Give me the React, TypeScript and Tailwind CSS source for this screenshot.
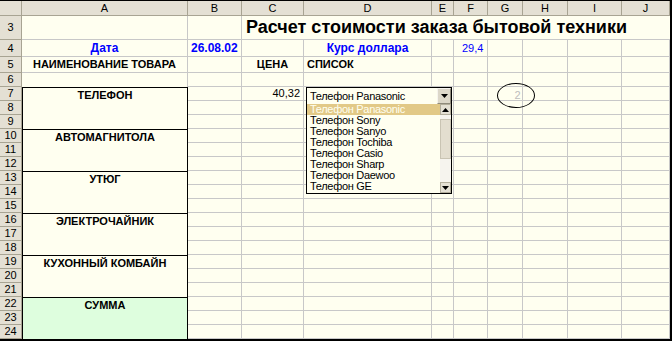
import React from "react";

const cols = ["A", "B", "C", "D", "E", "F", "G", "H", "I", "J"];

const grid = "border-r border-b border-[#C8C8C8]";
const hdr = "bg-[#E4E0D4] border-r border-b border-[#A8A493] flex items-center justify-center text-[11px] text-black";

const groups: Record<number, { label: string; green?: boolean }> = {
  7: { label: "ТЕЛЕФОН" },
  10: { label: "АВТОМАГНИТОЛА" },
  13: { label: "УТЮГ" },
  16: { label: "ЭЛЕКТРОЧАЙНИК" },
  19: { label: "КУХОННЫЙ КОМБАЙН" },
  22: { label: "СУММА", green: true },
};

const items = [
  "Телефон Panasonic",
  "Телефон Sony",
  "Телефон Sanyo",
  "Телефон Tochiba",
  "Телефон Casio",
  "Телефон Sharp",
  "Телефон Daewoo",
  "Телефон GE",
];

// обычная пустая ячейка
const Cell = ({ className = "", children }: { className?: string; children?: React.ReactNode }) => (
  <div className={`${grid} flex items-center overflow-visible whitespace-nowrap ${className}`}>{children}</div>
);

const RowNum = ({ n }: { n: number }) => <div className={hdr}>{n}</div>;

export default function App() {
  const rows: React.ReactNode[] = [];

  // шапка с буквами столбцов
  rows.push(<div key="corner" className={hdr} />);
  cols.forEach((c) => rows.push(<div key={"h" + c} className={hdr}>{c}</div>));

  // строка 3 — заголовок
  rows.push(<RowNum key="r3" n={3} />);
  rows.push(<Cell key="a3" />);
  rows.push(<Cell key="b3" />);
  rows.push(
    <div key="t3" className="col-span-8 border-b border-[#C8C8C8] flex items-center pl-[4px] text-[18px] font-bold whitespace-nowrap">
      Расчет стоимости заказа бытовой техники
    </div>
  );

  // строка 4
  rows.push(<RowNum key="r4" n={4} />);
  rows.push(<Cell key="a4" className="justify-center text-[12px] font-bold text-[#0000FF]">Дата</Cell>);
  rows.push(<Cell key="b4" className="pl-[3px] text-[12px] font-bold text-[#0000FF]">26.08.02</Cell>);
  rows.push(<Cell key="c4" />);
  rows.push(<Cell key="d4" className="justify-center text-[12px] font-bold text-[#0000FF]">Курс доллара</Cell>);
  rows.push(<Cell key="e4" />);
  rows.push(<Cell key="f4" className="pl-[8px] text-[11px] text-[#0000FF]">29,4</Cell>);
  ["g", "h", "i", "j"].forEach((c) => rows.push(<Cell key={c + "4"} />));

  // строка 5
  rows.push(<RowNum key="r5" n={5} />);
  rows.push(<Cell key="a5" className="justify-center text-[11px] font-bold">НАИМЕНОВАНИЕ ТОВАРА</Cell>);
  rows.push(<Cell key="b5" />);
  rows.push(<Cell key="c5" className="justify-center text-[11px] font-bold">ЦЕНА</Cell>);
  rows.push(<Cell key="d5" className="pl-[3px] text-[11px] font-bold">СПИСОК</Cell>);
  ["e", "f", "g", "h", "i", "j"].forEach((c) => rows.push(<Cell key={c + "5"} />));

  // строка 6
  rows.push(<RowNum key="r6" n={6} />);
  rows.push(<div key="a6" className="border-r border-[#C8C8C8]" />);
  ["b", "c", "d", "e", "f", "g", "h", "i", "j"].forEach((c) => rows.push(<Cell key={c + "6"} />));

  // строки 7–24
  for (let r = 7; r <= 24; r++) {
    rows.push(<RowNum key={"r" + r} n={r} />);
    const g = groups[r];
    if (g) {
      rows.push(
        <div
          key={"a" + r}
          className={`row-span-3 border-x border-t border-black flex justify-center pt-[1px] text-[11px] font-bold leading-[13px] ${
            g.green ? "bg-[#DEFEDE]" : ""
          }`}
        >
          {g.label}
        </div>
      );
    }
    ["b", "c", "d", "e", "f", "g", "h", "i", "j"].forEach((c) =>
      rows.push(
        r === 7 && c === "c" ? (
          <Cell key={c + r} className="justify-end pr-[3px] text-[11px]">40,32</Cell>
        ) : (
          <Cell key={c + r} />
        )
      )
    );
  }

  return (
    <div className="w-[672px] h-[341px] overflow-hidden bg-[#FFFFF0] font-['Liberation_Sans',Arial,sans-serif] text-black">
      <div className="relative border-t border-b-2 border-r-2 border-black">
        <div className="grid grid-cols-[22px_166px_54px_62px_128px_22px_34px_35px_45px_54px_48px] grid-rows-[15px_24px_17px_16px_14px_repeat(18,14px)]">
          {rows}
        </div>

        {/* Выпадающий список */}
        <div className="absolute left-[306px] top-[86px] w-[146px] h-[18px] border border-black bg-[#FFFFF0] flex items-center">
          <span className="pl-[3px] text-[11px] tracking-[-0.3px] flex-1">Телефон Panasonic</span>
          <div className="w-[14px] h-full bg-[#DCD7C9] border-t border-l border-[#F6F4EE] border-r border-b border-r-[#8F8B7C] border-b-[#8F8B7C] flex items-center justify-center">
            <svg width="7" height="4" viewBox="0 0 7 4"><path d="M0 0h7L3.5 4z" fill="#000" /></svg>
          </div>
        </div>
        <div className="absolute left-[306px] top-[103px] w-[146px] h-[90px] border-x border-b border-black bg-[#FFFFF0] flex">
          <div className="flex-1 flex flex-col">
            {items.map((it, i) => (
              <div
                key={it}
                className={`h-[11px] flex items-center pl-[3px] text-[11px] tracking-[-0.3px] leading-[11px] ${
                  i === 0 ? "bg-[#E2C987] text-[#FFFFF0]" : ""
                }`}
              >
                {it}
              </div>
            ))}
          </div>
          <div className="w-[11px] flex flex-col bg-[#F6F4EE]">
            <div className="h-[11px] bg-[#E4E0D4] border border-[#B3AE9C] flex items-center justify-center">
              <svg width="7" height="4" viewBox="0 0 7 4"><path d="M3.5 0L7 4H0z" fill="#000" /></svg>
            </div>
            <div className="h-[4px]" />
            <div className="h-[40px] bg-[#E3DECF] border border-[#C9C4B3]" />
            <div className="flex-1" />
            <div className="h-[11px] bg-[#E4E0D4] border border-[#B3AE9C] flex items-center justify-center">
              <svg width="7" height="4" viewBox="0 0 7 4"><path d="M0 0h7L3.5 4z" fill="#000" /></svg>
            </div>
          </div>
        </div>

        {/* Овал с номером */}
        <div className="absolute left-[497px] top-[82px] w-[38px] h-[25px] rounded-[50%] border border-black flex items-center justify-center pl-[3px] text-[11px] text-[#BDBDBD]">
          2
        </div>
      </div>
    </div>
  );
}
